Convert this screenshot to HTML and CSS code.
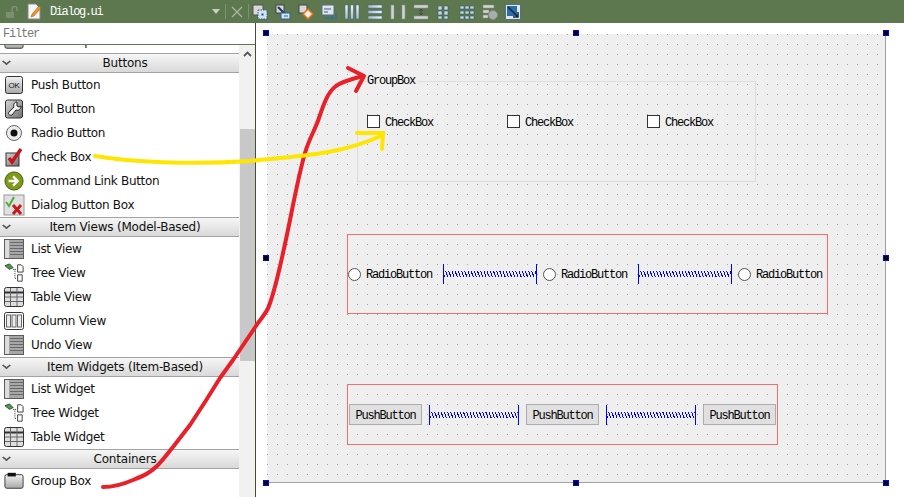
FILE: index.html
```html
<!DOCTYPE html>
<html lang="en">
<head>
  <meta charset="UTF-8">
  <title>Dialog.ui</title>
  <link rel="stylesheet" href="styles.css">
</head>
<body>
  <svg class="defs" width="0" height="0">
    <defs>
      <linearGradient id="metal" x1="0" y1="0" x2="0" y2="1"><stop offset="0" stop-color="#f2f2f2"/><stop offset="1" stop-color="#a8a8a8"/></linearGradient>
      <linearGradient id="steel" x1="0" y1="0" x2="1" y2="1"><stop offset="0" stop-color="#d8d8d8"/><stop offset="1" stop-color="#6e6e6e"/></linearGradient>
      <linearGradient id="tb" x1="0" y1="0" x2="0" y2="1"><stop offset="0" stop-color="#f4f6f6"/><stop offset="1" stop-color="#a9b9c4"/></linearGradient>
      <symbol id="i-ok" viewBox="0 0 20 20"><rect x="1.500" y="1.500" width="17" height="17" rx="2" fill="url(#metal)" stroke="#333"/><text x="10" y="13" class="ok-text">OK</text></symbol>
      <symbol id="i-tool" viewBox="0 0 20 20"><rect x="1.500" y="1" width="17" height="18" rx="2" fill="url(#steel)" stroke="#333"/><path d="M13 3c-3 0-4 3-3 5l-5 5c-1.500 2 1 4 3 3l4-5c3 1 5-1 5-4l-2 1-2-1z" fill="#f0f0f0" stroke="#222"/></symbol>
      <symbol id="i-radio" viewBox="0 0 20 20"><circle cx="10" cy="10" r="7.500" fill="#ececec" stroke="#666"/><circle cx="10" cy="10" r="3.500" fill="#111"/></symbol>
      <symbol id="i-check" viewBox="0 0 20 20"><rect x="2" y="6" width="13" height="13" fill="url(#steel)" stroke="#333"/><path d="M5 11l3 4 9-13" fill="none" stroke="#c8141e" stroke-width="3.400"/></symbol>
      <symbol id="i-link" viewBox="0 0 22 22"><circle cx="11" cy="11" r="10" fill="#7d9a18" stroke="#3d5205"/><path d="M5 11h9M10 6l5 5-5 5" fill="none" stroke="#fff" stroke-width="2.600"/></symbol>
      <symbol id="i-box" viewBox="0 0 22 22"><rect x="1" y="1" width="20" height="20" fill="#e0e0e0" stroke="#999"/><path d="M3 8l3 4 5-9" fill="none" stroke="#4cae3c" stroke-width="2"/><path d="M10 11l8 9M18 11l-8 9" stroke="#c81818" stroke-width="3"/></symbol>
      <symbol id="i-list" viewBox="0 0 20 20"><rect x="0.500" y="0.500" width="19" height="19" fill="#a6a6a6" stroke="#5c5c5c"/><rect x="1" y="1" width="4" height="18" fill="#dcdcdc"/><path d="M6 3.500h13M6 6.500h13M6 9.500h13M6 12.500h13M6 15.500h13" stroke="#6a6a6a"/></symbol>
      <symbol id="i-tree" viewBox="0 0 22 20"><path d="M1 2l5-2 4 4-4 2z" fill="#4f9a34" stroke="#244"/><path d="M10 6h4M12 6v10h2" fill="none" stroke="#222" stroke-dasharray="1 1"/><path d="M15 1h4l2 2v6h-6zM15 12h5v7h-5z" fill="#fff" stroke="#333"/></symbol>
      <symbol id="i-table" viewBox="0 0 20 20"><rect x="0.500" y="0.500" width="19" height="19" rx="2" fill="#dedede" stroke="#333"/><path d="M1 5.500h18" stroke="#333" stroke-width="2"/><path d="M1 10h18M1 14.500h18M6.500 1v18M13 1v18" stroke="#666"/></symbol>
      <symbol id="i-column" viewBox="0 0 20 18"><rect x="0.500" y="0.500" width="19" height="17" rx="2" fill="#fff" stroke="#333"/><rect x="2.500" y="3" width="4" height="12" fill="#ececec" stroke="#666"/><rect x="8" y="3" width="4" height="12" fill="#ececec" stroke="#666"/><rect x="13.500" y="3" width="4" height="12" fill="#ececec" stroke="#666"/></symbol>
      <symbol id="i-group" viewBox="0 0 22 20"><rect x="1" y="3" width="20" height="15" rx="2" fill="url(#metal)" stroke="#333"/><rect x="4" y="1" width="9" height="4" fill="#111"/></symbol>
      <symbol id="i-bars" viewBox="0 0 16 16"><rect x="1" y="1" width="3" height="14" fill="url(#tb)" stroke="#3f6f8f" stroke-width=".6"/><rect x="6.500" y="1" width="3" height="14" fill="url(#tb)" stroke="#3f6f8f" stroke-width=".6"/><rect x="12" y="1" width="3" height="14" fill="url(#tb)" stroke="#3f6f8f" stroke-width=".6"/></symbol>
      <symbol id="i-dots" viewBox="0 0 16 16"><path d="M2 2h4v4H2zM8 2h4v4H8zM2 7h4v4H2zM8 7h4v4H8zM2 12h4v3H2zM8 12h4v3H8z" fill="#c9d6dc" stroke="#2f5a70" stroke-width=".6"/></symbol>
    </defs>
  </svg>

  <header class="topbar">
    <div class="tab">
      <svg class="lock" width="14" height="14" viewBox="0 0 14 14"><rect x="1" y="7" width="8" height="6" fill="#7c9070"/><path d="M7 7V4a2.500 2.500 0 0 1 5 0v2" fill="none" stroke="#7c9070" stroke-width="1.500"/></svg>
      <svg class="doc" width="15" height="17" viewBox="0 0 15 17"><path d="M1 1h8l4 4v11H1z" fill="#f6f6f6" stroke="#888"/><path d="M4 14l1-3 7-8 2 2-7 8z" fill="#e8932c" stroke="#a85a10" stroke-width=".5"/></svg>
      <span class="tab-name">Dialog.ui</span>
      <span class="tab-arrow"></span>
    </div>
    <span class="sep"></span>
    <svg class="close" width="12" height="12" viewBox="0 0 12 12"><path d="M1 1l10 10M11 1L1 11" stroke="#a9b8a2" stroke-width="1.200"/></svg>
    <span class="sep"></span>
    <div class="tools">
      <svg width="16" height="16" viewBox="0 0 16 16"><rect x="1" y="1" width="10" height="10" fill="#d8d8d8" stroke="#555"/><rect x="6" y="6" width="9" height="9" fill="#d4e2ee" stroke="#2a5f9e" stroke-dasharray="1.500 1"/><rect x="9.500" y="9.500" width="2" height="2" fill="#1a4f9e"/></svg>
      <svg width="16" height="16" viewBox="0 0 16 16"><rect x="1" y="1" width="8" height="8" fill="#d8d8d8" stroke="#444"/><path d="M3 3l7 7" stroke="#123c66" stroke-width="2"/><rect x="6" y="9" width="9" height="6" fill="#d4e2ee" stroke="#2a5f9e"/><path d="M9 12h4" stroke="#2a5f9e"/></svg>
      <svg width="16" height="16" viewBox="0 0 16 16"><rect x="1" y="1" width="8" height="8" fill="#d8d8d8" stroke="#444"/><path d="M10 5l5 5-5 5-5-5z" fill="#f7efe0" stroke="#e06a1c" stroke-width="1.500"/></svg>
      <svg width="16" height="16" viewBox="0 0 16 16"><rect x="1" y="1" width="12" height="10" fill="#dfe6ea" stroke="#56707e"/><path d="M3 5h7M3 8h4" stroke="#2a5f9e"/><path d="M3 14h9M10 12l3 2-3 2" fill="none" stroke="#2a6fb0"/><path d="M15 9v7" stroke="#2a6fb0"/></svg>
      <svg width="16" height="16"><use href="#i-bars"/></svg>
      <svg width="16" height="16" class="turn"><use href="#i-bars"/></svg>
      <svg width="16" height="16" viewBox="0 0 16 16"><path d="M1 1h3v14H1zM12 1h3v14h-3z" fill="#cfd4d4" stroke="#8a9090" stroke-width=".6"/><path d="M5 8h6M5 8l2-2M5 8l2 2M11 8L9 6M11 8l-2 2" fill="none" stroke="#687070"/></svg>
      <svg width="16" height="16" viewBox="0 0 16 16"><path d="M1 1h14v3H1zM1 12h14v3H1z" fill="#cfd4d4" stroke="#8a9090" stroke-width=".6"/><path d="M8 5v6M8 5L6 7M8 5l2 2M8 11L6 9M8 11l2-2" fill="none" stroke="#404848"/></svg>
      <svg width="16" height="16"><use href="#i-dots"/></svg>
      <svg width="16" height="16" viewBox="0 0 16 16"><path d="M1 2h4v3H1zM6 2h4v3H6zM11 2h4v3h-4zM1 7h4v3H1zM6 7h4v3H6zM11 7h4v3h-4zM1 12h4v3H1zM6 12h4v3H6zM11 12h4v3h-4z" fill="#c9d6dc" stroke="#2f5a70" stroke-width=".6"/></svg>
      <svg width="16" height="16" viewBox="0 0 16 16"><path d="M1 1h11v3H1zM1 6h6v3H1zM1 11h5v3H1z" fill="#d4d8d6" stroke="#848a86" stroke-width=".6"/><circle cx="11" cy="11" r="4.500" fill="#a9aeaa" stroke="#848a86"/></svg>
      <svg width="16" height="16" viewBox="0 0 16 16"><rect x="0.500" y="0.500" width="15" height="15" fill="#dfe6ea" stroke="#56707e"/><rect x="2" y="2" width="10" height="10" fill="#2c6ea3"/><path d="M3 3l10 10M13 8v5H8" fill="none" stroke="#0c2a44" stroke-width="1.500"/></svg>
    </div>
  </header>

  <main class="workspace">
    <aside class="sidebar">
      <div class="filter">Filter</div>
      <div class="box-area">
        <div class="box-list">
          <div class="row clipped"><svg width="20" height="20"><use href="#i-group"/></svg>Vertical Spacer</div>
          <div class="cat">Buttons</div>
          <div class="row"><svg width="20" height="20"><use href="#i-ok"/></svg>Push Button</div>
          <div class="row"><svg width="20" height="20"><use href="#i-tool"/></svg>Tool Button</div>
          <div class="row"><svg width="20" height="20"><use href="#i-radio"/></svg>Radio Button</div>
          <div class="row"><svg width="20" height="20"><use href="#i-check"/></svg>Check Box</div>
          <div class="row"><svg width="20" height="20"><use href="#i-link"/></svg>Command Link Button</div>
          <div class="row"><svg class="wide" width="22" height="22"><use href="#i-box"/></svg>Dialog Button Box</div>
          <div class="cat">Item Views (Model-Based)</div>
          <div class="row"><svg width="20" height="20"><use href="#i-list"/></svg>List View</div>
          <div class="row"><svg width="20" height="20"><use href="#i-tree"/></svg>Tree View</div>
          <div class="row"><svg width="20" height="20"><use href="#i-table"/></svg>Table View</div>
          <div class="row"><svg width="20" height="20"><use href="#i-column"/></svg>Column View</div>
          <div class="row"><svg width="20" height="20"><use href="#i-list"/></svg>Undo View</div>
          <div class="cat">Item Widgets (Item-Based)</div>
          <div class="row"><svg width="20" height="20"><use href="#i-list"/></svg>List Widget</div>
          <div class="row"><svg width="20" height="20"><use href="#i-tree"/></svg>Tree Widget</div>
          <div class="row"><svg width="20" height="20"><use href="#i-table"/></svg>Table Widget</div>
          <div class="cat">Containers</div>
          <div class="row"><svg width="20" height="20"><use href="#i-group"/></svg>Group Box</div>
        </div>
        <div class="scrollbar">
          <svg class="up" width="9" height="6" viewBox="0 0 9 6"><path d="M1 5l3.500-3.500L8 5" fill="none" stroke="#555" stroke-width="1.800"/></svg>
          <div class="thumb"></div>
        </div>
      </div>
    </aside>

    <section class="canvas">
      <div class="form">
        <span class="handle h-tl"></span><span class="handle h-tc"></span><span class="handle h-tr"></span>
        <span class="handle h-ml"></span><span class="handle h-mr"></span>
        <span class="handle h-bl"></span><span class="handle h-bc"></span><span class="handle h-br"></span>

        <div class="groupbox">
          <span class="group-title">GroupBox</span>
          <label class="check"><i></i><span>CheckBox</span></label>
          <label class="check"><i></i><span>CheckBox</span></label>
          <label class="check"><i></i><span>CheckBox</span></label>
        </div>

        <div class="layout layout-radio">
          <label class="radio"><i></i><span>RadioButton</span></label>
          <span class="spring"></span>
          <label class="radio"><i></i><span>RadioButton</span></label>
          <span class="spring"></span>
          <label class="radio"><i></i><span>RadioButton</span></label>
        </div>

        <div class="layout layout-push">
          <button class="push">PushButton</button>
          <span class="spring"></span>
          <button class="push">PushButton</button>
          <span class="spring"></span>
          <button class="push">PushButton</button>
        </div>
      </div>
    </section>
  </main>

  <!-- hand drawn arrows on top of the screenshot -->
  <svg class="scribble" width="904" height="497" viewBox="0 0 904 497">
    <path d="M103 487C115 487 124 484 133 480C143 476 150 473 157 466C163 460 168 453 173 447L190 425L205 402L220 378L233 360L258 323C263 316 267 312 269 306C277 285 284 250 291 215C295 195 300 170 305 153C309 139 315 130 319 118C324 103 328 92 336 86C343 81 352 79 363 76" fill="none" stroke="#e8202a" stroke-width="4" stroke-linecap="round" stroke-linejoin="round"/>
    <path d="M348 68L364 76L356 91" fill="none" stroke="#e8202a" stroke-width="4" stroke-linecap="round" stroke-linejoin="round"/>
    <path d="M95 156C130 162 190 165 250 161C300 156 340 155 383 135" fill="none" stroke="#ffe600" stroke-width="4" stroke-linecap="round"/>
    <path d="M357 133L383 133L382 149" fill="none" stroke="#ffe600" stroke-width="4" stroke-linecap="round"/>
  </svg>
</body>
</html>
```

FILE: styles.css
```css
/* Qt Designer window */
body {
  margin: 0;
  width: 904px;
  height: 497px;
  overflow: hidden;
  position: relative;
  background-color: #fff;
  font-family: "DejaVu Sans", sans-serif;
}

.defs {
  position: absolute;
}

.ok-text {
  font-family: "Liberation Sans", sans-serif;
  font-size: 8px;
  text-anchor: middle;
  fill: #111;
}

/* top bar */
.topbar {
  height: 23px;
  background-color: #5d784f;
  display: flex;
  align-items: center;
}

.tab {
  width: 225px;
  display: flex;
  align-items: center;
  padding-left: 5px;
  box-sizing: border-box;
}

.lock {
  margin-right: 8px;
}

.doc {
  margin-right: 8px;
}

.tab-name {
  font-family: "Liberation Mono", monospace;
  font-size: 12px;
  letter-spacing: -1.4px;
  color: #fff;
}

.tab-arrow {
  margin-left: auto;
  margin-right: 5px;
  border-left: 4px solid transparent;
  border-right: 4px solid transparent;
  border-top: 5px solid #c6d0c0;
}

.sep {
  width: 1px;
  height: 15px;
  background-color: #7c9470;
}

.close {
  margin: 0 5px;
}

.tools {
  display: flex;
  gap: 7px;
  margin-left: 3px;
}

.turn {
  transform: rotate(90deg);
}

/* left panel */
.workspace {
  display: flex;
  height: 474px;
}

.sidebar {
  width: 255px;
  border-right: 1px solid #3f4f3a;
  display: flex;
  flex-direction: column;
}

.filter {
  height: 21px;
  line-height: 23px;
  padding-left: 3px;
  border-bottom: 1px solid #5d784f;
  font-family: "Liberation Mono", monospace;
  font-size: 12px;
  letter-spacing: -1.2px;
  color: #777;
}

.box-area {
  flex: 1;
  display: flex;
  overflow: hidden;
  min-height: 0;
}

.box-list {
  width: 239px;
  overflow: hidden;
}

.row {
  height: 24px;
  display: flex;
  align-items: center;
  gap: 7px;
  padding-left: 4px;
  font-size: 12px;
  letter-spacing: -0.3px;
  color: #111;
}

.row svg {
  flex: none;
}

.row .wide {
  margin: 0 -1px 0 -1px;
}

.clipped {
  margin-top: -16px;
}

.cat {
  height: 18px;
  line-height: 18px;
  padding-left: 11px;
  text-align: center;
  font-size: 12px;
  letter-spacing: -0.2px;
  color: #111;
  background: linear-gradient(#f6f6f6, #d9d9d9);
  border-top: 1px solid #a3a3a3;
  border-bottom: 1px solid #a3a3a3;
  position: relative;
}

.cat::before {
  content: "";
  position: absolute;
  left: 3px;
  top: 4px;
  width: 5px;
  height: 5px;
  border-right: 2px solid #555;
  border-bottom: 2px solid #555;
  transform: scale(0.9, 0.7) rotate(45deg);
}

.scrollbar {
  width: 16px;
  background-color: #f1f1f1;
  position: relative;
}

.up {
  position: absolute;
  left: 4px;
  top: 6px;
}

.thumb {
  position: absolute;
  left: 1px;
  right: 0;
  top: 84px;
  height: 232px;
  background-color: #c8c8c8;
}

/* form editor */
.canvas {
  flex: 1;
  padding: 11px 0 0 11px;
}

.form {
  width: 618px;
  height: 448px;
  position: relative;
  border-right: 1px solid #a0a0a0;
  border-bottom: 1px solid #a0a0a0;
  background-color: #efefef;
  background-image: conic-gradient(from 270deg at 1px 1px, #a0a0a0 90deg, transparent 0);
  background-size: 10px 10px;
  font-family: "Liberation Mono", monospace;
  font-size: 12px;
  color: #000;
}

.handle {
  position: absolute;
  width: 4px;
  height: 4px;
  background-color: #000;
  border: 1px solid #0000ff;
}

.h-tl { left: -4px; top: -4px; }
.h-tc { left: 306px; top: -4px; }
.h-tr { left: 616px; top: -4px; }
.h-ml { left: -4px; top: 221px; }
.h-mr { left: 616px; top: 221px; }
.h-bl { left: -4px; top: 446px; }
.h-bc { left: 306px; top: 446px; }
.h-br { left: 616px; top: 446px; }

.groupbox {
  position: absolute;
  left: 90px;
  top: 47px;
  width: 399px;
  height: 101px;
  box-sizing: border-box;
  padding: 32px 0 0 9px;
  border: 1px solid #dcdcdc;
  display: flex;
}

.group-title {
  position: absolute;
  left: 9px;
  top: -8px;
  padding-right: 4px;
  line-height: 14px;
  letter-spacing: -1.2px;
  background-color: #efefef;
}

.check {
  flex: none;
  width: 140px;
  height: 14px;
  display: flex;
  align-items: center;
  gap: 5px;
  letter-spacing: -1.2px;
}

.check span {
  padding-top: 3px;
}

.check:last-child {
  width: 100px;
}

.check i {
  flex: none;
  width: 11px;
  height: 11px;
  background-color: #fff;
  border: 1px solid #333;
}

.layout {
  position: absolute;
  left: 80px;
  box-sizing: border-box;
  border: 1px solid #f07070;
  display: flex;
  align-items: center;
}

.layout-radio {
  top: 200px;
  width: 481px;
  height: 80px;
}

.layout-push {
  top: 350px;
  width: 431px;
  height: 61px;
  padding-left: 1px;
}

.radio {
  flex: none;
  display: flex;
  align-items: center;
  gap: 5px;
  width: 95px;
  letter-spacing: -1.2px;
}

.radio span {
  padding-top: 2px;
}

.radio i {
  flex: none;
  width: 11px;
  height: 11px;
  border: 1px solid #555;
  border-radius: 50%;
  background-color: #fff;
}

.spring {
  flex: none;
  width: 92px;
  height: 20px;
  border-left: 1px solid #0000ff;
  border-right: 1px solid #0000ff;
  background-image: repeating-linear-gradient(70deg, #0000ff 0 1px, transparent 1px 3px);
  background-size: 100% 6px;
  background-position: 0 7px;
  background-repeat: no-repeat;
}

.layout-radio .spring {
  margin-right: 6px;
}

.layout-push .spring {
  width: 88px;
  margin: 0 7px;
}

.push {
  flex: none;
  width: 73px;
  height: 21px;
  padding: 2px 0 0;
  background-color: #e0e0e0;
  border: 1px solid #adadad;
  font-family: "Liberation Mono", monospace;
  font-size: 12px;
  letter-spacing: -1.2px;
  color: #000;
}

/* the arrows lie over everything */
.scribble {
  position: absolute;
  left: 0;
  top: 0;
  pointer-events: none;
}
```
